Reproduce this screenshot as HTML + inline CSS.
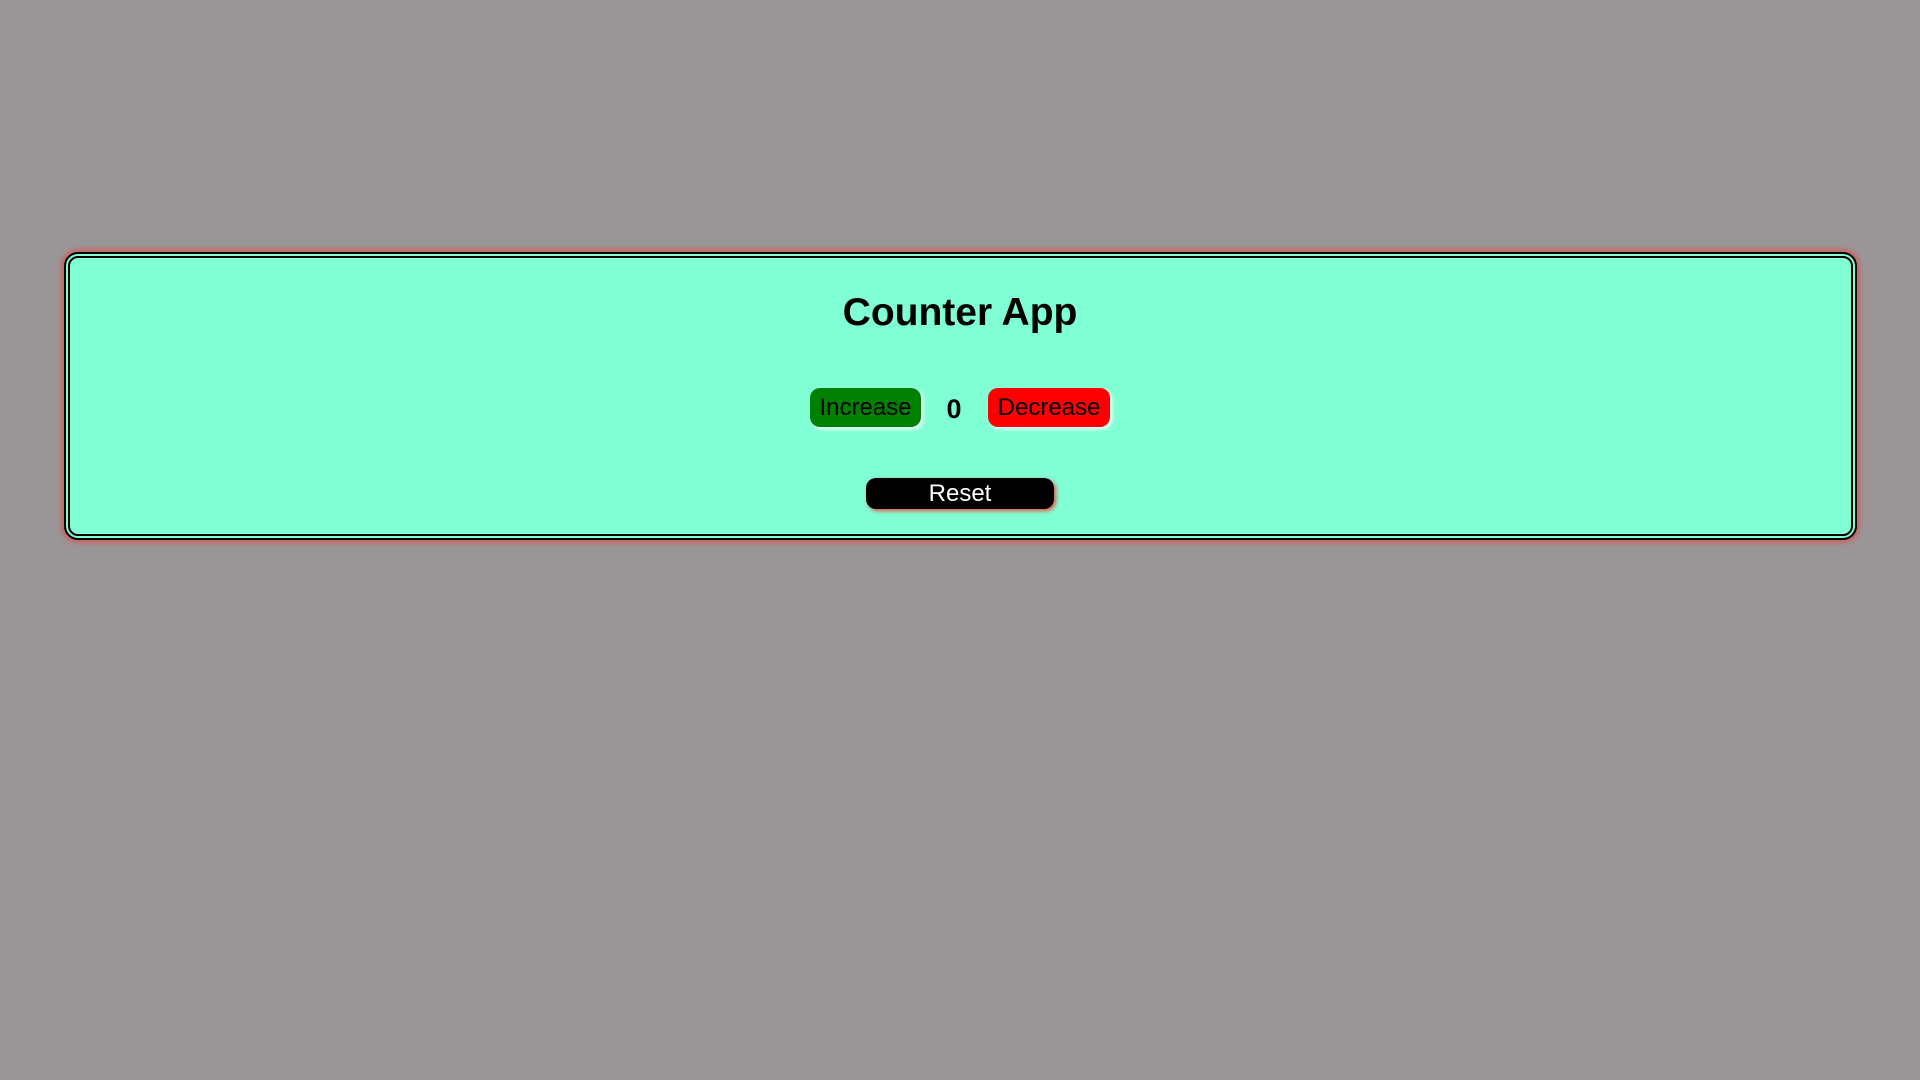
<!DOCTYPE html>
<html><head><style>
html,body{margin:0;padding:0;width:1920px;height:1080px;background:#9a9697;font-family:"Liberation Sans",Arial,sans-serif;}
.card{position:absolute;left:64px;top:252px;width:1793px;height:288px;box-sizing:border-box;border:6px double #000;border-radius:14px;background:#80ffd4;box-shadow:0 0 6px 2px rgba(255,40,40,0.6);}
h1{position:absolute;left:0;right:0;top:291px;margin:0;text-align:center;font-size:39px;font-weight:bold;color:#000;}
.btn{position:absolute;box-sizing:border-box;border-radius:10px;font-size:24px;text-align:center;color:#000;}
.inc{left:810px;top:388px;width:111px;height:39px;line-height:39px;background:#008000;box-shadow:2px 2px 4px #fff;}
.dec{left:988px;top:388px;width:122px;height:39px;line-height:39px;background:#ff0000;box-shadow:2px 2px 4px #fff;}
.zero{position:absolute;left:940px;width:28px;top:394px;text-align:center;font-size:27px;font-weight:bold;}
.reset{left:866px;top:478px;width:188px;height:31px;line-height:31px;background:#000;color:#fff;box-shadow:2px 2px 4px rgba(255,40,40,0.8);}
</style></head><body>
<div class="card"></div>
<h1>Counter App</h1>
<div class="btn inc">Increase</div>
<div class="zero">0</div>
<div class="btn dec">Decrease</div>
<div class="btn reset">Reset</div>
</body></html>
